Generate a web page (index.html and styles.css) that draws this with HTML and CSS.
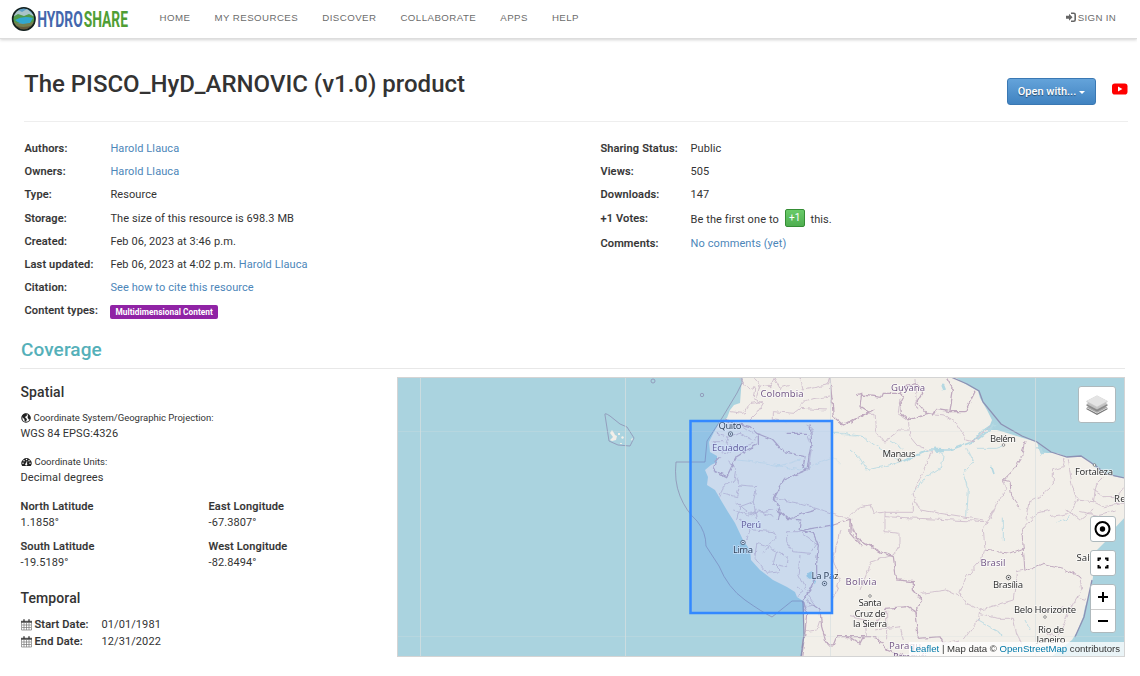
FILE: index.html
```html
<!DOCTYPE html>
<html lang="en">
<head>
<meta charset="utf-8">
<title>The PISCO_HyD_ARNOVIC (v1.0) product | HydroShare</title>
<link rel="stylesheet" href="styles.css">
</head>
<body>
<header class="navbar">
  <a class="brand" aria-label="HydroShare">
    <svg width="119" height="26" viewBox="11 6 119 26">
      <defs><clipPath id="globe"><circle cx="23.8" cy="19" r="11.3"/></clipPath></defs>
      <g clip-path="url(#globe)">
        <rect x="11" y="6" width="26" height="26" fill="#5d9fc6"/>
        <path d="M12 14l6-4 4 2 5-3 9 8v4H11z" fill="#a9c3c9"/>
        <path d="M11 18l7-4 6 2 5-2 8 4v5H11z" fill="#4f9a4b"/>
        <path d="M15 20q8-5 18-2l-3 5q-8 3-15-3z" fill="#31a7cf"/>
        <path d="M11 20q6 4 12 4t12-3v11H11z" fill="#74804f"/>
        <path d="M14 25q9 4 19 0l-4 6H19z" fill="#655a3c"/>
      </g>
      <circle cx="23.8" cy="19" r="11.2" fill="none" stroke="#14211f" stroke-width="1.6"/>
      <text class="logo-text" y="27" font-size="22.5"><tspan x="37.2" textLength="45.6" lengthAdjust="spacingAndGlyphs" fill="#4367ad">HYDRO</tspan><tspan x="83.7" textLength="44.3" lengthAdjust="spacingAndGlyphs" fill="#4f9e34">SHARE</tspan></text>
    </svg>
  </a>
  <nav class="menu"><a>HOME</a><a>MY RESOURCES</a><a>DISCOVER</a><a>COLLABORATE</a><a>APPS</a><a>HELP</a></nav>
  <a class="sign-in"><svg width="12" height="11" viewBox="0 0 12 11"><path d="M1 3.800h3V1.800l3.500 3.500L4 8.800V6.800H1z" fill="#666"/><path d="M6 1.200h2.700q1.500 0 1.500 1.500v5q0 1.500-1.500 1.500H6" fill="none" stroke="#666" stroke-width="1.600"/></svg>SIGN IN</a>
</header>
<main class="page">
  <section class="title-row">
    <h1>The PISCO_HyD_ARNOVIC (v1.0) product</h1>
    <button class="open-with">Open with...<i class="caret"></i></button>
    <svg class="youtube" width="16" height="12" viewBox="0 0 16 12"><rect y=".5" width="15.5" height="11" rx="2.8" fill="#f00"/><path d="M6 3.6v4.8L10.4 6z" fill="#fff"/></svg>
  </section>
  <section class="facts">
    <dl class="facts-left">
      <div><dt>Authors:</dt><dd><a>Harold Llauca</a></dd></div>
      <div><dt>Owners:</dt><dd><a>Harold Llauca</a></dd></div>
      <div><dt>Type:</dt><dd>Resource</dd></div>
      <div><dt>Storage:</dt><dd>The size of this resource is 698.3 MB</dd></div>
      <div><dt>Created:</dt><dd>Feb 06, 2023 at 3:46 p.m.</dd></div>
      <div><dt>Last updated:</dt><dd>Feb 06, 2023 at 4:02 p.m. <a>Harold Llauca</a></dd></div>
      <div><dt>Citation:</dt><dd><a>See how to cite this resource</a></dd></div>
      <div><dt>Content types:</dt><dd><span class="tag">Multidimensional Content</span></dd></div>
    </dl>
    <dl class="facts-right">
      <div><dt>Sharing Status:</dt><dd>Public</dd></div>
      <div><dt>Views:</dt><dd>505</dd></div>
      <div><dt>Downloads:</dt><dd>147</dd></div>
      <div class="votes"><dt>+1 Votes:</dt><dd>Be the first one to <button class="plus">+1</button> this.</dd></div>
      <div><dt>Comments:</dt><dd><a>No comments (yet)</a></dd></div>
    </dl>
  </section>
  <h2>Coverage</h2>
  <section class="coverage">
    <div class="details">
      <h3>Spatial</h3>
      <p class="small"><svg width="10" height="10" viewBox="0 0 10 10"><circle cx="5" cy="5" r="4.2" fill="#fff" stroke="#222" stroke-width="1.1"/><path d="M.8 3Q2 .5 5 .5L6.2 2 5 3.400 4 3.800 4.600 5 6 6 5 8.800 3.600 8 3.300 6 1.500 4.600zM7 1.200l2.200 2.300.3 2L8 6.800 6.600 4.800z" fill="#222"/></svg>Coordinate System/Geographic Projection:</p>
      <p>WGS 84 EPSG:4326</p>
      <p class="small units"><svg width="11" height="10" viewBox="0 0 11 10"><path d="M1.200 9A5.100 5.100 0 1 1 9.800 9z" fill="#222"/><g fill="#fff"><circle cx="2" cy="6.300" r=".75"/><circle cx="3" cy="3.700" r=".75"/><circle cx="5.500" cy="2.500" r=".75"/><circle cx="8" cy="3.700" r=".75"/><circle cx="9" cy="6.300" r=".75"/><path d="M5.800 4l.5.200-.3 2.400a1.100 1.100 0 1 1-1-.3z"/></g></svg>Coordinate Units:</p>
      <p>Decimal degrees</p>
      <div class="bounds">
        <div><b>North Latitude</b><span>1.1858°</span></div>
        <div><b>East Longitude</b><span>-67.3807°</span></div>
        <div><b>South Latitude</b><span>-19.5189°</span></div>
        <div><b>West Longitude</b><span>-82.8494°</span></div>
      </div>
      <h3 class="temporal">Temporal</h3>
      <div class="date"><svg width="11" height="12" viewBox="0 0 11 12"><use href="#cal"/></svg><b>Start Date:</b><span>01/01/1981</span></div>
      <div class="date"><svg width="11" height="12" viewBox="0 0 11 12"><g id="cal" fill="none" stroke="#777"><path d="M.5 2.500h10v8.500H.5zM3 4v7M5.500 4v7M8 4v7M1 6h9M1 8.500h9" stroke-width=".7"/><path d="M0 2.800h11" stroke="#555" stroke-width="2"/><path d="M3 .3v2.400M8 .3v2.400" stroke="#333" stroke-width="1.300"/></g></svg><b>End Date:</b><span>12/31/2022</span></div>
    </div>
    <div class="map">
      <svg class="tiles" width="726" height="278" viewBox="398 378 726 278">
        <rect x="397" y="377" width="728" height="280" fill="#aad3df"/>
        <path class="land" d="M742 376L741 390 740 403 734 405 730 410 727 418 718 425 714 432 709 442 710 452 717 456 717 462 711 465 705 470 708 477 707 485 715 490 722 502 728 512 735 523 743 540 750 550 751 560 760 570 773 580 787 587 795 592 797 597 803 601 803 620 804 633 802 647 801 658H1050L1063 647 1072 640 1077 632 1083 617 1085 607 1088 598 1091 587 1093 577 1093 563 1097 550 1105 542 1113 530 1126 516V478L1117 477 1103 473 1095 467 1088 460 1080 456 1067 457 1057 453 1047 453 1040 452 1037 442 1023 438 1007 433 997 430 983 430 990 425 992 420 987 410 980 398 978 391 967 385 953 376z"/>
        <defs><filter id="rough" x="0" y="0" width="100%" height="100%" color-interpolation-filters="sRGB"><feTurbulence type="fractalNoise" baseFrequency=".16" numOctaves="2" seed="4"/><feDisplacementMap in="SourceGraphic" scale="5" xChannelSelector="R" yChannelSelector="G"/></filter></defs>
        <g filter="url(#rough)">
          <!-- rivers and lakes -->
          <g class="river">
            <g transform="translate(850 370) scale(.3333)">
              <path d="M-50 190L-20 190 40 200 80 230 120 255 160 275 240 240M0 240L30 265 50 300 120 285 160 272M250 240L280 250 275 290 230 320 190 370M350 235L370 275 340 310 355 360 350 440M380 235H440L460 228M120 210L160 235"/>
              <path stroke-width="5" d="M160 272L240 240 300 240 370 215 400 180 440 165M425 290L432 312M380 210L420 180 430 160"/>
              <path stroke-width="9" d="M250 240L285 242M565 230L578 252M278 45L284 60"/>
            </g>
            <g class="faint" transform="translate(640 370) scale(.3333)"><path d="M290 270L380 280 430 290 480 300 580 260 600 280M580 190L650 200M410 290L480 270"/></g>
            <g transform="translate(850 510) scale(.3333)"><path d="M620 40L660 20M380 330L460 375M525 330L540 360M460 20V90"/></g>
          </g>
          <path class="lake" d="M807 573l4-2 1 5 5 4-1 3-4-3-4-2z"/>
          <!-- provincial boundaries -->
          <g class="province">
            <g transform="translate(640 370) scale(.3333)">
              <path d="M300 25L330 60 345 50 340 85 370 100 350 130 330 150M340 20L360 45 350 80M270 125L310 130 330 100 370 95M400 20L420 55 450 45M480 20L490 60 560 45 570 20M400 125L460 130 480 115 560 120M400 125V150L440 155M480 110L500 90 570 78M230 190L270 200 300 190 340 210 360 190M270 190L260 225 300 235 340 220M215 215L250 215M245 245L270 250 280 240M310 170L340 190M405 20L390 50 360 45M260 270L290 300 285 330 250 350 240 380M290 325L300 345 350 350 340 395 300 410 290 450M300 345L290 380 250 370M340 395L350 450M290 400L330 430 400 420M400 385L480 400 580 430 640 450M500 165L520 175 505 200 515 230 505 300"/>
            </g>
            <g transform="translate(640 510) scale(.3333)">
              <path d="M280 0L330 15 350 0 400 20M300 30L340 60 400 65 410 80 380 110 350 100 345 140M330 60L320 90M370 130L385 110 410 125 400 160 420 180M410 125L445 145 440 170 415 165M345 145L380 190 420 185M440 65L480 65 530 100 510 130 460 125 440 95zM480 135L475 190 500 240M470 230L490 245 470 260M600 60L580 150 600 210 580 270M495 365L530 360 540 330M630 50L660 100M500 250L525 285 490 290"/>
            </g>
            <g transform="translate(850 370) scale(.3333)">
              <path d="M50 130L75 130 80 185 105 220 120 200 145 180 175 180M150 85L145 130 175 150 180 200 200 225 245 245 190 370 195 390 210 420 400 450M190 395L190 427 100 427 70 430 60 405 30 410 0 440M195 30L200 120M175 150L230 130 285 135 320 160 350 210 370 215 420 170M460 330L470 355 440 400 420 450M645 265L640 290 610 300 610 345 570 380 540 395 530 450M655 265L665 340 680 390 730 395 740 340 760 320M680 390L660 430 600 440M730 360L760 380 800 380 824 350M730 395L760 410 824 400M690 425L740 435 800 420"/>
            </g>
            <g transform="translate(850 510) scale(.3333)">
              <path d="M105 0L105 65 150 70 150 100 130 135M0 45L20 85 100 130M105 20L410 35M430 0L400 60 405 120M400 120L395 150 350 200 330 250 350 280 390 300 490 270 500 185 525 180M215 250L290 240 330 260M390 300L385 330 340 390M390 310L440 325 490 325 500 370 515 400M525 50L560 10 600 0M690 200L695 240 670 280 650 320 625 380M620 380L590 370M680 260L705 268M30 240L65 155 130 135M70 350L110 300 110 385M75 360L150 350 160 390M580 300L640 290M0 320L45 330 50 380M650 0L690 30 730 0M280 400L330 390"/>
            </g>
          </g>
          <!-- national boundaries -->
          <g class="nation">
            <g transform="translate(640 370) scale(.3333)">
              <path d="M570 20L575 80 580 140 610 165 630 155 700 120M250 150L330 170 350 190 400 210 430 245 495 260 490 290 500 300 430 330 415 355 400 385 420 420 415 450M355 190L355 220 290 260 270 300 260 320 220 300 225 275 240 260M500 300L515 215 510 160M440 190L500 190"/>
            </g>
            <g transform="translate(640 510) scale(.3333)">
              <path d="M410 0L440 25 485 30 480 60 520 70 535 105 530 160 530 200 510 240 490 270M440 25L530 0M490 60L580 45 630 30 630 70 665 110M500 270L540 300 545 350 560 405 580 405 590 380 670 380M490 270L500 310 495 370 485 440"/>
            </g>
            <g transform="translate(850 370) scale(.3333)">
              <path d="M0 160L55 125 30 110 35 70 20 75M35 75L95 82 100 70 150 70 160 80 150 100 155 130 175 150 230 130 200 95 215 70 205 40M230 130L250 135 260 118 300 125 310 60 290 25M300 125L345 125 375 65M150 70L170 45 205 40"/>
              <path class="state" d="M525 210L515 260 490 300 460 330 480 335 485 380 510 415"/>
            </g>
            <g transform="translate(850 510) scale(.3333)">
              <path d="M0 30L20 85 100 130 130 140 140 210 190 215 190 240 215 270 195 310 205 385M105 295L170 290 200 310M205 385L270 380 280 400M0 380L30 400 40 380 80 380 110 420 160 440"/>
              <path class="state" d="M400 120L440 125 480 130 520 115 515 60 525 50M520 115L525 185 580 160 640 175 690 200"/>
            </g>
          </g>
        </g>
        <g class="maritime">
          <path d="M742 378V383L737 393 722 418 707 441 705 462H676Q674 481 680 496T697 521Q706 532 706 546L719 566Q728 588 745 600T772 617L792 601H803M605 415Q604 412 610 416L620 424 627 427 634 438 630 446 618 445 609 441z"/>
          <path stroke-width="1.3" d="M951 377L967 384 979 391 983 402 1001 424 1022 436 1037 442 1051 452 1067 457 1081 456 1096 466 1106 474 1125 478M801 657L804 635 803 601M1092 580L1084 617 1075 637"/>
          <circle cx="653" cy="381" r="2"/><circle cx="702" cy="395" r="1.7"/>
        </g>
        <path fill="#f2efe9" d="M610 433l2-3 2 3 1 2 2 1-1 4-4 1-2-1 3-3zM618 433h2v2h-2zM621 437l2-1 1 2-2 1zM631 439l2-1-1 3zM620 443h2v1h-2z"/>
        <path class="grid" d="M420.500 377V657M625.500 377V657M830.500 377V657M1035.500 377V657"/>
        <path class="grid faint" d="M397 431.500H1125M397 636.500H1125"/>
        <g class="places">
          <g class="country"><text x="782" y="397" textLength="43">Colombia</text><text x="908" y="391" textLength="34">Guyana</text><text x="730" y="451" textLength="36">Ecuador</text><text x="751" y="528" textLength="20">Perú</text><text x="861" y="585" textLength="31">Bolivia</text><text x="993" y="566" textLength="25">Brasil</text><text x="905" y="649" textLength="32">Paragu</text><text x="910" y="660" textLength="34">Paraguái</text></g>
          <text x="730" y="429" textLength="23">Quito</text><text x="743" y="553" textLength="20">Lima</text><text x="825" y="579" textLength="27">La Paz</text><text x="899" y="457" textLength="33">Manaus</text><text x="1003" y="441.500" textLength="26">Belém</text><text x="1094" y="475" textLength="38">Fortaleza</text><text x="1128" y="502" textLength="28">Recife</text><text x="1096" y="561" textLength="39">Salvador</text><text x="1008" y="588" textLength="30">Brasília</text><text x="1045" y="613" textLength="62">Belo Horizonte</text><text x="870" y="606" textLength="23">Santa</text><text x="870" y="616.500" textLength="31">Cruz de</text><text x="870" y="627" textLength="34">la Sierra</text><text x="1051" y="633" textLength="26">Rio de</text><text x="1051" y="643" textLength="29">Janeiro</text>
        </g>
        <g class="towns"><circle cx="899.500" cy="460" r="1.300"/><circle cx="1003.500" cy="445" r="1.300"/><circle cx="1094.500" cy="465" r="1.300"/><circle cx="870" cy="596" r="1.300"/><circle cx="1045" cy="617" r="1.300"/><g class="capital"><circle cx="730.500" cy="434" r="2.200"/><circle cx="743" cy="542.500" r="2.200"/><circle cx="824.500" cy="583.500" r="2.200"/><circle cx="1008.500" cy="577.500" r="2.200"/></g><g class="dot"><circle cx="730.500" cy="434" r=".8"/><circle cx="743" cy="542.500" r=".8"/><circle cx="824.500" cy="583.500" r=".8"/><circle cx="1008.500" cy="577.500" r=".8"/></g></g>
        <rect x="690.500" y="421" width="141.500" height="192" fill="#3388ff" fill-opacity=".2" stroke="#3388ff" stroke-width="2.500"/>
      </svg>
      <div class="control layers"><svg width="24" height="24" viewBox="0 0 24 24"><path d="M1.500 15L12 20.500 22.500 15v1.300L12 22 1.500 16.300z" fill="#777"/><path d="M1.500 14.500L12 9 22.500 14.500 12 20z" fill="#aaa"/><path d="M1.500 11.500L12 6 22.500 11.500v1.300L12 18.500 1.500 12.800z" fill="#8a8a8a"/><path d="M1.500 11L12 5.500 22.500 11 12 16.500z" fill="#c2c2c2"/><path d="M1.500 8L12 2.500 22.500 8v1L12 15 1.500 9z" fill="#c8c8c8"/><path d="M1.500 8L12 2.500 22.500 8 12 13.700z" fill="#e4e4e4"/></svg></div>
      <div class="stack">
        <div class="control"><svg width="18" height="18" viewBox="0 0 18 18"><circle cx="8.500" cy="9" r="7" fill="none" stroke="#000" stroke-width="2"/><circle cx="8.500" cy="9" r="2.700"/></svg></div>
        <div class="control"><svg width="14" height="14" viewBox="0 0 14 14"><path d="M2.500 5V2.500H5M9 2.500h2.500V5M11.500 9v2.500H9M5 11.500H2.500V9" fill="none" stroke="#000" stroke-width="2"/></svg></div>
        <div class="zoom"><div><svg width="12" height="12" viewBox="0 0 12 12"><path d="M1 6h10M6 1v10" stroke="#000" stroke-width="2"/></svg></div><div><svg width="12" height="12" viewBox="0 0 12 12"><path d="M1 6h10" stroke="#000" stroke-width="2"/></svg></div></div>
      </div>
      <div class="attribution"><a>Leaflet</a> | Map data © <a>OpenStreetMap</a> contributors</div>
    </div>
  </section>
</main>
</body>
</html>
```

FILE: styles.css
```css
* { box-sizing: border-box; }
body { margin: 0; width: 1137px; background: #fff; color: #333; font: 11px/16px Roboto, sans-serif; letter-spacing: .09px; }
h1, h2, h3, p, dl, dd { margin: 0; font-weight: 400; }
a { color: #4c86b9; }
b, dt { font-weight: 500; letter-spacing: .16px; -webkit-text-stroke: .15px #333; }
svg { display: block; flex: none; }

.navbar { display: flex; align-items: flex-start; height: 39px; padding: 6px 21px 0 11px; border-bottom: 1px solid #ddd; box-shadow: 0 1px 3px rgba(0,0,0,.18); font: 9.700px/12px "Liberation Sans", Arial, sans-serif; letter-spacing: .45px; }
.navbar a { color: #6c6c6c; }
.logo-text { font-family: Roboto, sans-serif; font-weight: 700; letter-spacing: 0; }
.menu { display: flex; gap: 24px; margin: 6px 0 0 29.500px; white-space: nowrap; }
.sign-in { display: flex; gap: 1px; margin: 6px 0 0 auto; letter-spacing: .3px; }

.title-row { display: flex; align-items: flex-start; height: 83px; margin: 0 9px 0 24px; border-bottom: 1px solid #eee; }
h1 { margin-top: 29px; font-size: 24px; line-height: 32px; font-weight: 500; letter-spacing: 0; white-space: nowrap; }
.open-with { display: flex; align-items: center; justify-content: center; width: 89px; height: 27px; margin: 39px 0 0 auto; padding: 1px 0 0; border: 1px solid #3a78b3; border-radius: 3px; background: linear-gradient(#64a3da, #4083c1); color: #fff; font: 500 11px/16px Roboto, sans-serif; text-shadow: 0 1px 1px rgba(0,0,0,.45); }
.caret { margin: 1px 0 0 3px; border: 3px solid transparent; border-top-color: #fff; border-bottom: 0; }
.youtube { margin: 44px 0 0 16px; }

.facts { display: grid; grid-template-columns: 576px 1fr; height: 209px; padding: 19px 0 0 24.400px; }
.facts dl > div { display: grid; height: 23.200px; white-space: nowrap; }
.facts-left > div { grid-template-columns: 86px 1fr; }
.facts-right > div { grid-template-columns: 90.200px 1fr; }
.facts .votes { height: 25.500px; }
.tag { display: inline-block; height: 14px; padding: 0 5px; border-radius: 2px; background: #9023a5; color: #fff; font-size: 8.300px; font-weight: 700; line-height: 14px; letter-spacing: .05px; vertical-align: -1px; }
.plus { width: 20px; height: 18px; margin: -2px 3px; padding: 0; border: 1px solid #358d35; border-radius: 2px; background: linear-gradient(#68cb68, #4fae50); color: #fff; font: 10px/13px Roboto, sans-serif; vertical-align: 1px; }

h2 { height: 38px; margin: 0 12px 0 20px; padding-left: 1px; border-bottom: 1px solid #e8e8e8; color: #55b0b9; font-size: 19px; font-weight: 500; line-height: 38px; }
.coverage { display: grid; grid-template-columns: 377px 728px; padding: 8px 0 0 20px; }
.details { padding: 6px 0 0 .5px; }
h3 { height: 27px; font-size: 14px; line-height: 18px; font-weight: 500; }
.details .small { display: flex; align-items: center; gap: 3px; height: 15px; margin-bottom: 1px; font-size: 9.500px; letter-spacing: 0; }
.details .units { margin-top: 12px; }
.bounds { display: grid; grid-template-columns: 188px 1fr; row-gap: 8px; margin-top: 13px; }
.bounds div { display: grid; }
.temporal { margin-top: 18px; }
.date { display: flex; align-items: center; height: 17px; }
.date b { width: 67px; margin-left: 3px; }

.map { position: relative; width: 728px; height: 280px; border: 1px solid #d4d4d4; overflow: hidden; letter-spacing: 0; }
.land { fill: #f2efe9; }
.river { fill: none; stroke: #b4d8e2; stroke-width: 2.500; }
.faint { opacity: .4; }
.lake { fill: #aad3df; }
.province { fill: none; stroke: #cdbbcb; stroke-width: 2.600; }
.nation { fill: none; stroke: #bfa8be; stroke-width: 3.800; }
.state { stroke-width: 3; }
.maritime { fill: none; stroke: #8d91b4; stroke-width: .8; }
.grid { fill: none; stroke: #d8dfdf; stroke-opacity: .7; }
.places { font: 9.500px "Noto Sans", sans-serif; fill: #333; text-anchor: middle; paint-order: stroke; stroke: rgba(255,255,255,.7); stroke-width: 1.500px; }
.country { fill: #765b88; }
.towns { fill: #fff; stroke: #666; stroke-width: .7; }
.capital { stroke: #333; }
.dot { fill: #333; stroke: none; }
.control { display: flex; align-items: center; justify-content: center; width: 26px; height: 26px; border: 1px solid #aeb9bd; border-radius: 3px; background: #fff; }
.layers { position: absolute; top: 8px; right: 8px; width: 38px; height: 37px; }
.stack { position: absolute; top: 138px; right: 8px; display: grid; gap: 8px; }
.zoom { width: 26px; border: 1px solid #aeb9bd; border-radius: 3px; background: #fff; }
.zoom div { display: flex; align-items: center; justify-content: center; height: 24px; }
.zoom div + div { height: 23px; border-top: 1px solid #ccc; }
.attribution { position: absolute; right: 0; bottom: 0; height: 14px; padding: 0 4px 0 1px; background: rgba(255,255,255,.75); font: 9.600px/14px "Liberation Sans", Arial, sans-serif; white-space: nowrap; }
.attribution a { color: #0078a8; }
```
